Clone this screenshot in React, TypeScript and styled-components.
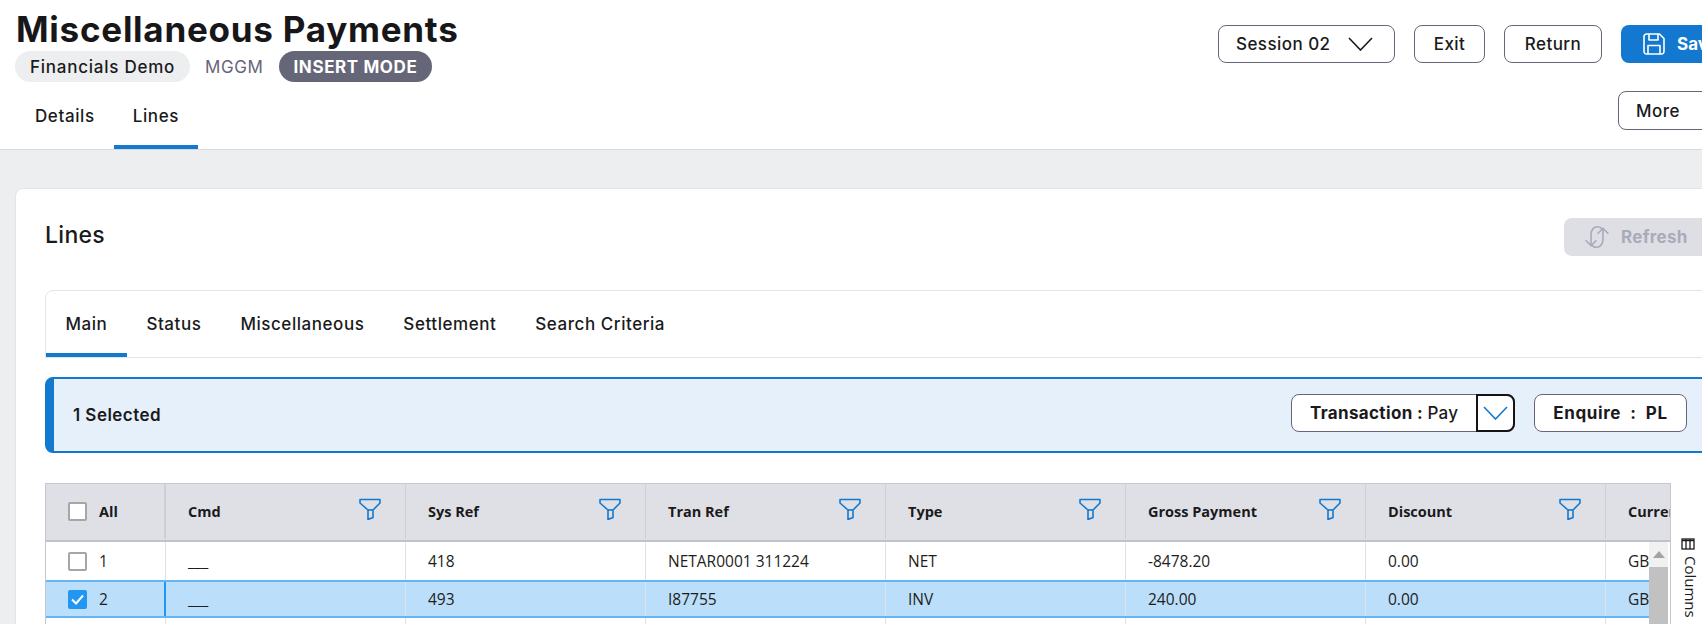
import { ReactElement } from "react";
import styled, { createGlobalStyle } from "styled-components";

const GlobalStyle = createGlobalStyle`
  html, body {
    margin: 0;
    padding: 0;
    background: #edeef0;
  }
  #root {
    width: 1702px;
    height: 624px;
    overflow: hidden;
  }
`;

const UI_FONT = `Inter, "Liberation Sans", sans-serif`;
const TABLE_FONT = `"Open Sans", "Noto Sans", sans-serif`;

const Page = styled.div`
  width: 1760px;
  height: 624px;
  font-family: ${UI_FONT};
  color: #1a1a1c;
`;

const Header = styled.header`
  height: 149px;
  padding: 0 8px 0 16px;
  display: flex;
  justify-content: space-between;
  background: #fff;
  border-bottom: 1px solid #d8d9e0;
`;

const TitleBlock = styled.div`
  display: flex;
  flex-direction: column;
`;

const Title = styled.h1`
  margin: 9px 0 2px;
  height: 40px;
  font-size: 35px;
  line-height: 40px;
  font-weight: 700;
  letter-spacing: 0.75px;
  color: #17171a;
  white-space: nowrap;
`;

const MetaRow = styled.div`
  display: flex;
  align-items: center;
  height: 31px;
  margin-left: -1px;
`;

const Pill = styled.span<{ $dark?: boolean }>`
  height: 31px;
  display: inline-flex;
  align-items: center;
  padding: 0 15px;
  border-radius: 16px;
  font-size: 17px;
  font-weight: ${(p) => (p.$dark ? 700 : 500)};
  letter-spacing: ${(p) => (p.$dark ? "0.6px" : "0.75px")};
  background: ${(p) => (p.$dark ? "#656678" : "#edeef0")};
  color: ${(p) => (p.$dark ? "#fff" : "#1a1a1c")};
`;

const Code = styled.span`
  margin: 0 15px;
  font-size: 17px;
  letter-spacing: 0.6px;
  color: #656678;
`;

const TabRow = styled.nav<{ $inner?: boolean }>`
  display: flex;
  margin-top: ${(p) => (p.$inner ? "0" : "3px")};
`;

const Tab = styled.div<{ $active?: boolean; $inner?: boolean }>`
  height: ${(p) => (p.$inner ? "58px" : "59px")};
  padding: ${(p) => (p.$inner ? "4px 19.5px 0" : "1px 19px 0")};
  display: flex;
  align-items: center;
  box-sizing: content-box;
  font-size: 17px;
  font-weight: 500;
  letter-spacing: ${(p) => (p.$inner ? "0.55px" : "0.6px")};
  border-bottom: 4px solid ${(p) => (p.$active ? "#1278d0" : "transparent")};
`;

const Actions = styled.div`
  display: flex;
  flex-direction: column;
  align-items: flex-end;
  padding-top: 25px;
`;

const ActionRow = styled.div`
  display: flex;
  gap: 19px;
`;

const OutlineButton = styled.button<{ $w: number; $h?: number }>`
  width: ${(p) => p.$w}px;
  height: ${(p) => p.$h || 38}px;
  box-sizing: border-box;
  display: flex;
  align-items: center;
  justify-content: center;
  padding: 0;
  background: #fff;
  border: 1px solid #656678;
  border-radius: 8px;
  font-family: ${UI_FONT};
  font-size: 17px;
  font-weight: 500;
  letter-spacing: 0.45px;
  color: #1a1a1c;
`;

const SessionButton = styled(OutlineButton)`
  justify-content: space-between;
  padding: 0 21px 0 17px;
`;

const MoreButton = styled(OutlineButton)`
  justify-content: flex-start;
  padding-left: 17px;
  margin-top: 28px;
`;

const SaveButton = styled.button`
  width: 131px;
  height: 38px;
  display: flex;
  align-items: center;
  gap: 12px;
  padding: 0 0 0 22px;
  background: #1278d0;
  border: none;
  border-radius: 8px;
  font-family: ${UI_FONT};
  font-size: 17px;
  font-weight: 700;
  color: #fff;
`;

const Content = styled.main`
  padding: 38px 16px 0 15px;
`;

const Card = styled.section`
  box-sizing: border-box;
  height: 500px;
  padding: 29px 30px 0;
  background: #fff;
  border: 1px solid #e3e4e9;
  border-bottom: none;
  border-radius: 8px 8px 0 0;
`;

const CardHead = styled.div`
  display: flex;
  justify-content: space-between;
  align-items: center;
  height: 38px;
  margin-left: -1px;
  margin-right: -1px;
  margin-bottom: 34px;
`;

const CardTitle = styled.h2`
  margin: -5px 0 0;
  font-size: 23px;
  font-weight: 500;
  letter-spacing: 0.3px;
`;

const RefreshButton = styled.button`
  width: 150px;
  height: 38px;
  display: flex;
  align-items: center;
  gap: 11px;
  padding: 0 0 0 20px;
  background: #dedfe5;
  border: none;
  border-radius: 8px;
  font-family: ${UI_FONT};
  font-size: 17px;
  font-weight: 700;
  letter-spacing: 0.3px;
  color: #a9aaba;
`;

const TabBox = styled.div`
  margin: 0 -1px;
  border: 1px solid #e3e4e9;
  border-radius: 8px 8px 0 0;
  height: 66px;
`;

const Banner = styled.div`
  box-sizing: border-box;
  height: 76px;
  margin: 19px -1px 30px;
  padding: 0 25px 4px 19px;
  display: flex;
  align-items: center;
  background: #e6f0fa;
  border: 2px solid #1278d0;
  border-left-width: 9px;
  border-radius: 8px;
`;

const BannerText = styled.span`
  flex: 1;
  font-size: 17px;
  font-weight: 600;
  letter-spacing: 0.45px;
  margin-top: 3px;
`;

const SplitButton = styled.div`
  box-sizing: border-box;
  width: 224px;
  height: 38px;
  display: flex;
  background: #fff;
  border: 1px solid #656678;
  border-radius: 8px;
  margin-right: 19px;
`;

const SplitLabel = styled.span`
  flex: 1;
  display: flex;
  align-items: center;
  padding-left: 18px;
  font-size: 17px;
  font-weight: 700;
  letter-spacing: 0.35px;
  white-space: pre;
`;

const Light = styled.span`
  font-weight: 500;
`;

const SplitCaret = styled.span`
  box-sizing: border-box;
  width: 39px;
  margin: -1px;
  display: flex;
  align-items: center;
  justify-content: center;
  border: 2px solid #141416;
  border-radius: 0 8px 8px 0;
`;

const EnquireButton = styled(OutlineButton)`
  font-weight: 700;
  letter-spacing: 0.6px;
  white-space: pre;
`;

const TableArea = styled.div`
  display: flex;
  margin: 0 -1px;
`;

const Table = styled.div`
  box-sizing: border-box;
  width: 1625px;
  overflow: hidden;
  font-family: ${TABLE_FONT};
  border-left: 1px solid #c6c7d0;
  border-top: 1px solid #c6c7d0;
`;

const GRID = "120px repeat(7, 240px)";

const HeadRow = styled.div`
  display: grid;
  grid-template-columns: ${GRID};
  height: 58px;
  box-sizing: border-box;
  background: #dfe0e6;
  border-bottom: 2px solid #c0c1cb;
`;

const HeadCell = styled.div`
  box-sizing: border-box;
  display: flex;
  align-items: center;
  justify-content: space-between;
  padding: 0 24px 0 22px;
  margin-bottom: 1px;
  font-size: 14.500px;
  font-weight: 700;
  white-space: nowrap;
  border-right: 1px solid #cdced6;
`;

const CheckHead = styled(HeadCell)`
  justify-content: flex-start;
  gap: 12px;
  padding-left: 22px;
  border-right: 2px solid #cdced6;
`;

const FilterIcon = styled.svg`
  width: 22px;
  height: 22px;
  flex-shrink: 0;
  margin: -6px 0 0 0;
`;

const Body = styled.div`
  display: flex;
  height: 84px;
`;

const Rows = styled.div`
  flex: 1;
  overflow: hidden;
`;

const Row = styled.div<{ $selected?: boolean }>`
  box-sizing: border-box;
  display: grid;
  grid-template-columns: ${GRID};
  height: 38px;
  width: 1800px;
  font-size: 15.500px;
  color: #1d1d20;
  background: ${(p) => (p.$selected ? "#bbdefb" : "#fff")};
  ${(p) =>
    p.$selected &&
    `border-top: 2px solid #64b5f6;
     border-bottom: 2px solid #64b5f6;`}
`;

const Cell = styled.div`
  box-sizing: border-box;
  display: flex;
  align-items: center;
  padding-left: 22px;
  white-space: nowrap;
  border-right: 1px solid #e0e1e7;
`;

const CheckCell = styled(Cell)<{ $selected?: boolean }>`
  gap: 12px;
  padding-left: 22px;
  border-right: ${(p) => (p.$selected ? "2px solid #2196f3" : "1px solid #e0e1e7")};
`;

const Check = styled.span<{ $on?: boolean }>`
  box-sizing: border-box;
  width: 19px;
  height: 19px;
  flex-shrink: 0;
  display: inline-flex;
  align-items: center;
  justify-content: center;
  background: ${(p) => (p.$on ? "#2196f3" : "#fff")};
  border: ${(p) => (p.$on ? "none" : "2px solid #a6a6a8")};
  border-radius: 2px;
`;

const ScrollTrack = styled.div`
  width: 19px;
  margin-right: 2px;
  display: flex;
  flex-direction: column;
  background: #f1f1f1;
`;

const ScrollArrow = styled.div`
  height: 25px;
  display: flex;
  align-items: center;
  justify-content: center;
`;

const ScrollThumb = styled.div`
  flex: 1;
  background: #c1c1c1;
`;

const SideBar = styled.aside`
  width: 44px;
  box-sizing: border-box;
  border-left: 1px solid #c6c7d0;
  display: flex;
  flex-direction: column;
  align-items: flex-start;
  padding: 55px 0 0 10px;
`;

const SideLabel = styled.span`
  margin-top: 6px;
  writing-mode: vertical-rl;
  font-family: ${TABLE_FONT};
  font-size: 15px;
  font-weight: 500;
  color: #1d1d20;
`;

const columns = [
  "Cmd",
  "Sys Ref",
  "Tran Ref",
  "Type",
  "Gross Payment",
  "Discount",
  "Currency",
];

const rows = [
  { no: "1", cells: ["___", "418", "NETAR0001 311224", "NET", "-8478.20", "0.00", "GBP"] },
  { no: "2", cells: ["___", "493", "I87755", "INV", "240.00", "0.00", "GBP"], selected: true },
];

function Chevron({ color, w, h }: { color: string; w: number; h: number }) {
  return (
    <svg width={w} height={h} viewBox="0 0 25 14" fill="none">
      <path d="M1 1l11.5 12L24 1" stroke={color} strokeWidth="1.6" />
    </svg>
  );
}

function Filter() {
  return (
    <FilterIcon viewBox="0 0 22 22" fill="none" stroke="#1278d0" strokeWidth="1.6" strokeLinejoin="round">
      <path d="M1 1.5h20v3.5l-7 7v7.5l-5 2V12L1 5z" />
      <path d="M9 12h5" />
    </FilterIcon>
  );
}

function Tick() {
  return (
    <svg width="13" height="11" viewBox="0 0 13 11" fill="none">
      <path d="M1 5.5l4 4L12 1.5" stroke="#fff" strokeWidth="2" />
    </svg>
  );
}

export default function App(): ReactElement {
  return (
    <>
      <GlobalStyle />
      <Page>
        <Header>
          <TitleBlock>
            <Title>Miscellaneous Payments</Title>
            <MetaRow>
              <Pill>Financials Demo</Pill>
              <Code>MGGM</Code>
              <Pill $dark>INSERT MODE</Pill>
            </MetaRow>
            <TabRow>
              <Tab>Details</Tab>
              <Tab $active>Lines</Tab>
            </TabRow>
          </TitleBlock>
          <Actions>
            <ActionRow>
              <SessionButton $w={177}>
                Session 02
                <Chevron color="#1a1a1c" w={25} h={14} />
              </SessionButton>
              <OutlineButton $w={71}>Exit</OutlineButton>
              <OutlineButton $w={98}>Return</OutlineButton>
              <SaveButton>
                <svg width="22" height="22" viewBox="0 0 22 22" fill="none" stroke="#fff" strokeWidth="1.6" strokeLinejoin="round">
                  <path d="M3.5 1H16.5L21 5.5V18.5a2.5 2.5 0 0 1-2.5 2.5H3.5A2.5 2.5 0 0 1 1 18.5V3.5A2.5 2.5 0 0 1 3.5 1z" />
                  <path d="M6 1v6h9V1" />
                  <path d="M5 21v-8.500h12V21" />
                </svg>
                Save
              </SaveButton>
            </ActionRow>
            <MoreButton $w={134} $h={39}>More</MoreButton>
          </Actions>
        </Header>
        <Content>
          <Card>
            <CardHead>
              <CardTitle>Lines</CardTitle>
              <RefreshButton>
                <svg width="26" height="26" viewBox="0 0 24 24" fill="none" stroke="#a9aaba" strokeWidth="1.5">
                  <path d="M6.500 20V9.500C6.500 5.500 9 2.500 12.500 2.500c1.800 0 3.300.8 4.300 2.200" />
                  <path d="M1.500 15l5 5 5-5" />
                  <path d="M17.500 4v10.500c0 4-2.500 7-6 7-1.800 0-3.300-.8-4.300-2.200" />
                  <path d="M12.500 9l5-5 5 5" />
                </svg>
                Refresh
              </RefreshButton>
            </CardHead>
            <TabBox>
              <TabRow $inner>
                <Tab $inner $active>Main</Tab>
                <Tab $inner>Status</Tab>
                <Tab $inner>Miscellaneous</Tab>
                <Tab $inner>Settlement</Tab>
                <Tab $inner>Search Criteria</Tab>
              </TabRow>
            </TabBox>
            <Banner>
              <BannerText>1 Selected</BannerText>
              <SplitButton>
                <SplitLabel>
                  Transaction : <Light>Pay</Light>
                </SplitLabel>
                <SplitCaret>
                  <Chevron color="#1278d0" w={25} h={14} />
                </SplitCaret>
              </SplitButton>
              <EnquireButton $w={153}>Enquire  :  PL</EnquireButton>
            </Banner>
            <TableArea>
              <Table>
                <HeadRow>
                  <CheckHead>
                    <Check />
                    All
                  </CheckHead>
                  {columns.map((c) => (
                    <HeadCell key={c}>
                      {c}
                      <Filter />
                    </HeadCell>
                  ))}
                </HeadRow>
                <Body>
                  <Rows>
                    {rows.map((r) => (
                      <Row key={r.no} $selected={r.selected}>
                        <CheckCell $selected={r.selected}>
                          <Check $on={r.selected}>{r.selected && <Tick />}</Check>
                          {r.no}
                        </CheckCell>
                        {r.cells.map((v, i) => (
                          <Cell key={i}>{v}</Cell>
                        ))}
                      </Row>
                    ))}
                    <Row>
                      <CheckCell />
                      {columns.map((c) => (
                        <Cell key={c} />
                      ))}
                    </Row>
                  </Rows>
                  <ScrollTrack>
                    <ScrollArrow>
                      <svg width="12" height="7" viewBox="0 0 12 7">
                        <path d="M6 0l6 7H0z" fill="#a3a3a3" />
                      </svg>
                    </ScrollArrow>
                    <ScrollThumb />
                  </ScrollTrack>
                </Body>
              </Table>
              <SideBar>
                <svg width="14" height="12" viewBox="0 0 14 12" fill="none" stroke="#1d1d20" strokeWidth="1.300">
                  <rect x="1" y="1" width="12" height="10" />
                  <path d="M1 2.500h12M5 1v10M9 1v10" />
                </svg>
                <SideLabel>Columns</SideLabel>
              </SideBar>
            </TableArea>
          </Card>
        </Content>
      </Page>
    </>
  );
}
